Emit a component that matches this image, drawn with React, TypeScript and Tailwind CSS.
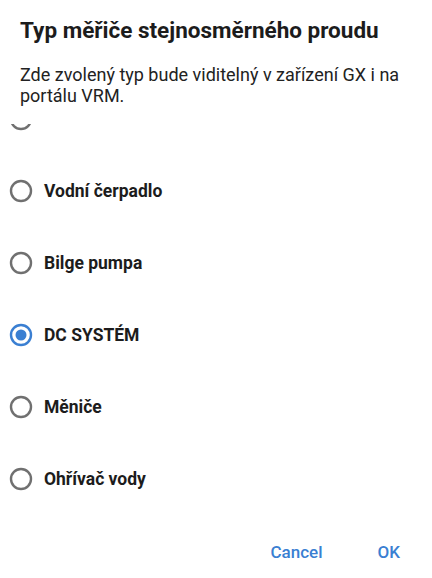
import React from "react";

const items = [
  { label: "", selected: false },
  { label: "Vodní čerpadlo", selected: false },
  { label: "Bilge pumpa", selected: false },
  { label: "DC SYSTÉM", selected: true },
  { label: "Měniče", selected: false },
  { label: "Ohřívač vody", selected: false },
];

function Radio({ selected }: { selected: boolean }) {
  return (
    <svg width="26" height="26" viewBox="0 0 26 26" className="shrink-0">
      <circle
        cx="13"
        cy="13"
        r="10"
        fill="none"
        stroke={selected ? "#3a7fd2" : "#707070"}
        strokeWidth="2.4"
      />
      {selected && <circle cx="13" cy="13" r="5.5" fill="#3a7fd2" />}
    </svg>
  );
}

export default function App() {
  return (
    <div className="w-[432px] h-[578px] bg-white flex flex-col font-['Roboto',sans-serif] overflow-hidden">
      <div className="px-5 pt-[17px] text-[22.5px] leading-[26px] font-bold text-[#1c1c1c]">
        Typ měřiče stejnosměrného proudu
      </div>
      <div className="px-5 mt-[21px] text-[18px] leading-[21px] text-[#222222]">
        Zde zvolený typ bude viditelný v zařízení GX i na portálu VRM.
      </div>
      <div className="mt-[18px] h-[395px] overflow-hidden">
        <div className="-mt-[41px] flex flex-col">
          {items.map((it, i) => (
            <div key={i} className="h-[72px] flex items-center pl-[8px] gap-[10px]">
              <Radio selected={it.selected} />
              <span className="text-[17.5px] font-bold text-[#1c1c1c]">{it.label}</span>
            </div>
          ))}
        </div>
      </div>
      <div className="flex justify-end items-center gap-[55px] pr-[32px] pt-[21px] text-[17px] font-medium text-[#3a7fd2]">
        <span>Cancel</span>
        <span>OK</span>
      </div>
    </div>
  );
}
